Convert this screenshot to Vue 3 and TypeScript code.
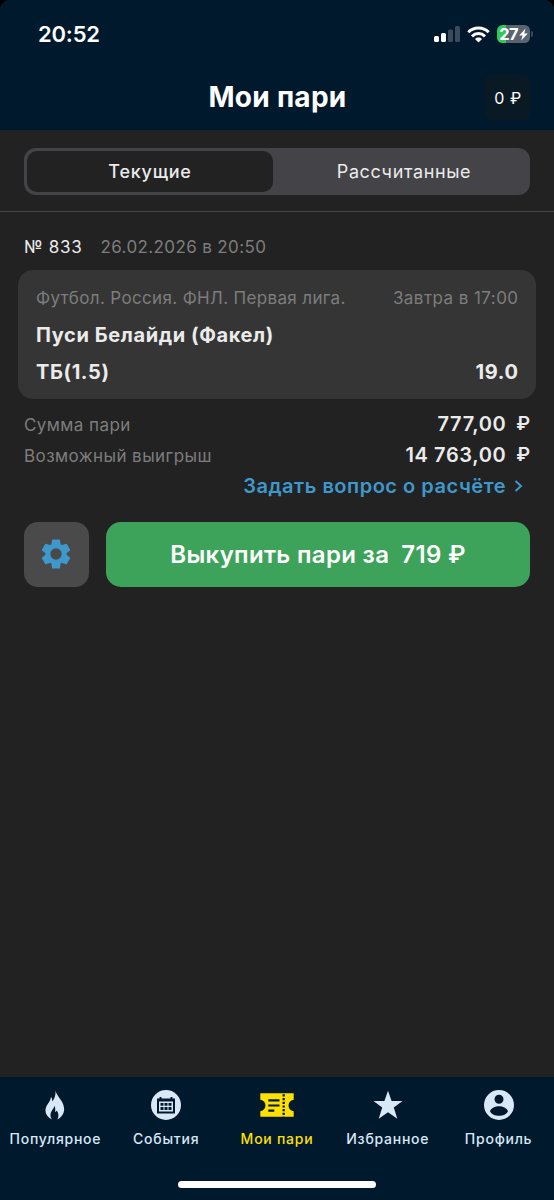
<script setup lang="ts">
type IconName = 'flame' | 'calendar' | 'ticket' | 'star' | 'profile'

interface NavItem {
  icon: IconName
  label: string
  active?: boolean
}

const navItems: NavItem[] = [
  { icon: 'flame', label: 'Популярное' },
  { icon: 'calendar', label: 'События' },
  { icon: 'ticket', label: 'Мои пари', active: true },
  { icon: 'star', label: 'Избранное' },
  { icon: 'profile', label: 'Профиль' },
]

const bet = {
  number: '№ 833',
  placedAt: '26.02.2026 в 20:50',
  league: 'Футбол. Россия. ФНЛ. Первая лига.',
  startsAt: 'Завтра в 17:00',
  event: 'Пуси Белайди (Факел)',
  outcome: 'ТБ(1.5)',
  odds: '19.0',
  stake: '777,00',
  payout: '14 763,00',
}
</script>

<template>
  <div class="screen">
    <header class="header">
      <div class="status">
        <span class="clock">20:52</span>
        <div class="indicators">
          <svg class="signal" width="27" height="18" viewBox="0 0 27 18">
            <rect x="0" y="11" width="5" height="6" rx="1.5" fill="#fff" />
            <rect x="7" y="8" width="5" height="9" rx="1.5" fill="#fff" />
            <rect x="14" y="4.5" width="5" height="12.5" rx="1.5" fill="#3b4b5b" />
            <rect x="21" y="1" width="5" height="16" rx="1.5" fill="#3b4b5b" />
          </svg>
          <svg class="wifi" width="23" height="17" viewBox="0 0 23 17">
            <g fill="none" stroke="#fff" stroke-width="3">
              <path d="M1.3 6.2C7 .6 16 .6 21.7 6.2" />
              <path d="M5 10.3C8.7 6.7 14.3 6.7 18 10.3" />
            </g>
            <path d="M11.5 16.5L8 13C10 11.1 13 11.1 15 13Z" fill="#fff" />
          </svg>
          <div class="battery">
            <span class="battery-text">27</span>
            <svg width="9" height="13" viewBox="0 0 9 12"><path d="M6.500 0L.2 7H3.600L2.200 12L8.800 5H5.300Z" fill="#fff" /></svg>
          </div>
          <span class="battery-cap"></span>
        </div>
      </div>
      <div class="titlebar">
        <h1 class="title">Мои пари</h1>
        <div class="balance">0 ₽</div>
      </div>
    </header>

    <main class="content">
      <div class="tabs-wrap">
        <div class="tabs">
          <button class="tab selected">Текущие</button>
          <button class="tab">Рассчитанные</button>
        </div>
      </div>

      <section class="bet">
        <div class="bet-head">
          <span class="bet-number">{{ bet.number }}</span>
          <span class="bet-date">{{ bet.placedAt }}</span>
        </div>
        <div class="card">
          <div class="row muted">
            <span class="league">{{ bet.league }}</span>
            <span class="starts">{{ bet.startsAt }}</span>
          </div>
          <div class="row strong"><span class="event">{{ bet.event }}</span></div>
          <div class="row strong">
            <span>{{ bet.outcome }}</span>
            <span class="odds">{{ bet.odds }}</span>
          </div>
        </div>
        <dl class="totals">
          <div class="total">
            <dt>Сумма пари</dt>
            <dd><span>{{ bet.stake }}</span><span class="currency">₽</span></dd>
          </div>
          <div class="total">
            <dt>Возможный выигрыш</dt>
            <dd><span>{{ bet.payout }}</span><span class="currency">₽</span></dd>
          </div>
        </dl>
        <a class="question">
          <span>Задать вопрос о расчёте</span>
          <svg width="9" height="12" viewBox="0 0 9 12"><path d="M1.5 1L7 6L1.5 11" fill="none" stroke="currentColor" stroke-width="2" /></svg>
        </a>
        <div class="actions">
          <button class="settings" aria-label="Настройки">
            <svg width="30" height="30" viewBox="-15 -15 30 30" fill="#3f98cc">
              <circle r="8.2" fill="none" stroke="#3f98cc" stroke-width="5" />
              <path
                v-for="angle in [0, 60, 120, 180, 240, 300]"
                :key="angle"
                :transform="`rotate(${angle})`"
                d="M-3.3 -14.4H3.3Q3.8 -14.4 3.9 -13.9L4.6 -9.8L3 -7.5H-3L-4.6 -9.8L-3.9 -13.9Q-3.8 -14.4 -3.3 -14.4Z"
              />
            </svg>
          </button>
          <button class="cashout"><span>Выкупить пари за</span><span>719 ₽</span></button>
        </div>
      </section>
    </main>

    <nav class="bottom">
      <div class="nav-items">
        <a v-for="item in navItems" :key="item.label" class="nav-item" :class="{ active: item.active }">
          <svg v-if="item.icon === 'flame'" width="20" height="30" viewBox="0 0 20 30">
            <path fill="currentColor" d="M10.5 .5C11 4 14 7 16.500 11C20.500 17.500 20.500 24.500 12.500 29.500C14 26 13.500 23 11.800 20.500C11 21.800 10.300 22 10 21.800C10.500 20 10.300 18 9.500 15.500C9 19 6 20.500 5.500 24.500C5.300 26.500 6 28 7 29.500C1 26.500-1 21.500 1.500 16C3 13 5.500 11 6 7C7 8 7.300 9.500 7.200 11.500C10 8.500 10.800 4.500 10.500 .5Z" />
          </svg>
          <svg v-else-if="item.icon === 'calendar'" width="30" height="30" viewBox="0 0 30 30">
            <circle cx="15" cy="15" r="15" fill="currentColor" />
            <path d="M6 8.5H8.5V7H10.5V8.5H19.5V7H21.5V8.5H24V23.5H6Z" fill="#00192d" />
            <path d="M8 11.5H22V21.5H8Z" fill="currentColor" />
            <path d="M9.5 13H12.5V15.8H9.5ZM13.5 13H16.5V15.8H13.5ZM17.5 13H20.5V15.8H17.5ZM9.5 17H12.5V20H9.5ZM13.5 17H16.5V20H13.5ZM17.5 17H20.5V20H17.5Z" fill="#00192d" />
          </svg>
          <svg v-else-if="item.icon === 'ticket'" width="34" height="30" viewBox="0 0 34 30">
            <path fill="currentColor" d="M.3 3.3H33.7V9.8C26.8 10.5 26.8 20.5 33.7 21.2V26.7H.3V21.2C7.2 20.5 7.2 10.5 .3 9.8Z" />
            <path fill="none" stroke="#00192d" stroke-width="2.2" d="M8.3 10.3H19.5M8.3 15.5H19.5M8.3 20.6H14.3" />
            <path fill="none" stroke="#00192d" stroke-width="2.3" stroke-dasharray="2.2 1.5" d="M23.7 4.3V26.7" />
          </svg>
          <svg v-else-if="item.icon === 'star'" width="30" height="30" viewBox="0 0 30 30">
            <path fill="currentColor" d="M15 .8L18.600 11H29.500L20.800 17.600L24.300 28.800L15 22.300L5.700 28.800L9.200 17.600L.5 11H11.400Z" />
          </svg>
          <svg v-else width="30" height="30" viewBox="0 0 30 30">
            <path fill="currentColor" fill-rule="evenodd" d="M15 0A15 15 0 1 1 15 30A15 15 0 1 1 15 0ZM15 4.7A4.5 4.5 0 1 0 15 13.7A4.5 4.5 0 1 0 15 4.7ZM6 21.2C8.5 27.3 21.5 27.3 24 21.2C21.5 14.7 8.5 14.7 6 21.2Z" />
          </svg>
          <span class="nav-label">{{ item.label }}</span>
        </a>
      </div>
      <div class="home"></div>
    </nav>
  </div>
</template>

<style>
body {
  margin: 0;
  background: #000;
}
</style>

<style scoped>
.screen {
  width: 554px;
  height: 1200px;
  display: flex;
  flex-direction: column;
  overflow: hidden;
  border-radius: 10px 10px 0 0;
  background: #222;
  color: #ebebeb;
  font-family: Inter, "Noto Sans", sans-serif;
  font-size: 17px;
}
button {
  margin: 0;
  padding: 0;
  border: 0;
  font: inherit;
  color: inherit;
}
.header {
  height: 130px;
  flex: none;
  background: #00192d;
  color: #fff;
}
.status {
  height: 68px;
  display: flex;
  align-items: center;
  justify-content: space-between;
  padding: 0 21px 0 38px;
}
.clock {
  font-size: 22px;
  font-weight: 600;
  letter-spacing: -0.2px;
}
.indicators {
  display: flex;
  align-items: center;
}
.wifi {
  margin: 0 7px 0 6px;
}
.battery {
  width: 33px;
  height: 18px;
  display: flex;
  align-items: center;
  justify-content: center;
  gap: 1px;
  border-radius: 5.5px;
  background: linear-gradient(90deg, #33c759 9px, #586470 9px);
}
.battery-text {
  font-size: 16.5px;
  line-height: 18px;
  font-weight: 700;
  letter-spacing: -0.8px;
}
.battery-cap {
  width: 2px;
  height: 6px;
  margin-left: 1px;
  border-radius: 0 2px 2px 0;
  background: #3b4b5b;
}
.titlebar {
  height: 58px;
  display: grid;
  grid-template-columns: 45px 1fr 45px;
  align-items: center;
  padding: 0 24px;
}
.title {
  grid-column: 2;
  margin: 0 -1px 0 0;
  text-align: center;
  font-size: 28px;
  line-height: 36px;
  font-weight: 700;
  letter-spacing: 0.3px;
}
.balance {
  height: 45px;
  box-sizing: border-box;
  margin-top: 1px;
  padding-left: 1px;
  border-radius: 6px;
  background: #091a25;
  line-height: 46px;
  font-size: 16px;
  text-align: center;
  letter-spacing: 0.5px;
}
.content {
  flex: 1;
}
.tabs-wrap {
  padding: 18px 24px 16px;
  border-bottom: 1px solid #464648;
}
.tabs {
  height: 41px;
  display: grid;
  grid-template-columns: 246px 1fr;
  padding: 3px;
  border-radius: 12px;
  background: #444347;
}
.tab {
  padding-left: 8px;
  background: none;
  border-radius: 10px;
  font-size: 18px;
  letter-spacing: 0.63px;
}
.tab.selected {
  padding-left: 0;
  background: #222;
  font-weight: 500;
  letter-spacing: 0.75px;
}
.bet {
  padding: 20px 24px 0;
}
.bet-head {
  height: 30px;
  display: flex;
  gap: 18px;
  line-height: 30px;
}
.bet-number {
  letter-spacing: 0.72px;
}
.bet-date {
  color: #7d7d7d;
  letter-spacing: 0.38px;
}
.card {
  height: 129px;
  box-sizing: border-box;
  margin: 8px -6px 0;
  padding: 10px 18px;
  border-radius: 15px;
  background: #353535;
}
.row {
  display: flex;
  justify-content: space-between;
  line-height: 36px;
  height: 37px;
}
.muted {
  color: #7d7d7d;
}
.league {
  letter-spacing: 0.35px;
}
.starts {
  margin-right: -0.5px;
  letter-spacing: 0.44px;
}
.strong {
  font-size: 20px;
  font-weight: 700;
  letter-spacing: 0.6px;
}
.odds {
  margin-right: -0.6px;
}
.totals {
  margin: 9px 0 0;
}
.total {
  display: flex;
  justify-content: space-between;
  height: 31px;
}
.total dt {
  line-height: 34px;
  color: #7d7d7d;
  letter-spacing: 0.43px;
}
.total dd {
  display: flex;
  gap: 10px;
  margin: 0;
  line-height: 32px;
  font-size: 20px;
  font-weight: 600;
  letter-spacing: 0.62px;
}
.currency {
  margin-right: -0.8px;
  font-size: 19px;
}
.question {
  box-sizing: border-box;
  display: flex;
  align-items: center;
  justify-content: flex-end;
  gap: 8px;
  height: 31px;
  padding: 1px 7px 0 0;
  color: #3f98cc;
  font-size: 20px;
  line-height: 30px;
  font-weight: 600;
  letter-spacing: 0.52px;
}
.actions {
  display: flex;
  gap: 17px;
  margin-top: 21px;
}
.settings {
  width: 65px;
  height: 65px;
  box-sizing: border-box;
  display: grid;
  place-items: center;
  padding: 0 1px 1px 0;
  border-radius: 14px;
  background: #4a4a4a;
}
.settings svg {
  display: block;
}
.cashout {
  flex: 1;
  display: flex;
  align-items: center;
  justify-content: center;
  gap: 12px;
  border-radius: 15px;
  background: #3da35a;
  color: #fff;
  font-size: 24px;
  font-weight: 600;
  letter-spacing: 0.32px;
}
.bottom {
  height: 123px;
  flex: none;
  background: #00192d;
}
.nav-items {
  display: grid;
  grid-template-columns: repeat(5, 1fr);
  padding: 13px 0 0;
  height: 91px;
}
.nav-item {
  display: flex;
  flex-direction: column;
  align-items: center;
  color: #d8e8f6;
}
.nav-item svg {
  display: block;
}
.nav-label {
  margin-top: 9px;
  font-size: 14px;
  line-height: 20px;
  font-weight: 500;
  letter-spacing: 0.75px;
  white-space: nowrap;
}
.active {
  color: #ffe000;
}
.home {
  width: 198px;
  height: 7px;
  margin: 0 auto;
  border-radius: 4px;
  background: #fff;
}
</style>
